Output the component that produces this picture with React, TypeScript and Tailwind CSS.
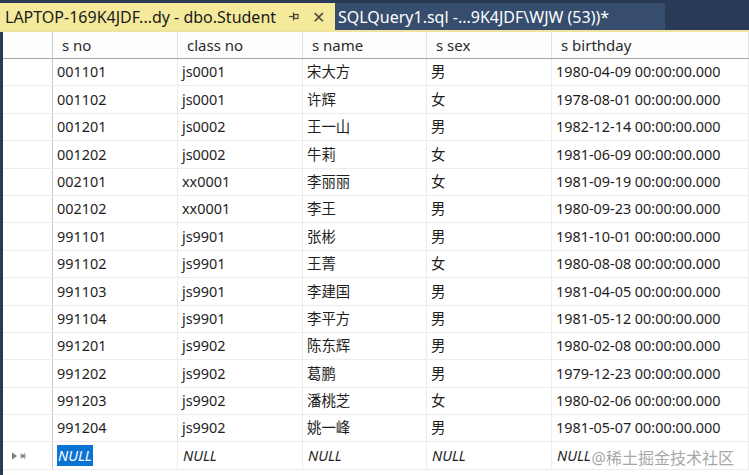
import React from "react";

// Result grid mock: SSMS-style table editor tab showing dbo.Student rows.

type Row = { no: string; cls: string; name: string; sex: string; birth: string };

const rows: Row[] = [
  { no: "001101", cls: "js0001", name: "宋大方", sex: "男", birth: "1980-04-09 00:00:00.000" },
  { no: "001102", cls: "js0001", name: "许辉", sex: "女", birth: "1978-08-01 00:00:00.000" },
  { no: "001201", cls: "js0002", name: "王一山", sex: "男", birth: "1982-12-14 00:00:00.000" },
  { no: "001202", cls: "js0002", name: "牛莉", sex: "女", birth: "1981-06-09 00:00:00.000" },
  { no: "002101", cls: "xx0001", name: "李丽丽", sex: "女", birth: "1981-09-19 00:00:00.000" },
  { no: "002102", cls: "xx0001", name: "李王", sex: "男", birth: "1980-09-23 00:00:00.000" },
  { no: "991101", cls: "js9901", name: "张彬", sex: "男", birth: "1981-10-01 00:00:00.000" },
  { no: "991102", cls: "js9901", name: "王菁", sex: "女", birth: "1980-08-08 00:00:00.000" },
  { no: "991103", cls: "js9901", name: "李建国", sex: "男", birth: "1981-04-05 00:00:00.000" },
  { no: "991104", cls: "js9901", name: "李平方", sex: "男", birth: "1981-05-12 00:00:00.000" },
  { no: "991201", cls: "js9902", name: "陈东辉", sex: "男", birth: "1980-02-08 00:00:00.000" },
  { no: "991202", cls: "js9902", name: "葛鹏", sex: "男", birth: "1979-12-23 00:00:00.000" },
  { no: "991203", cls: "js9902", name: "潘桃芝", sex: "女", birth: "1980-02-06 00:00:00.000" },
  { no: "991204", cls: "js9902", name: "姚一峰", sex: "男", birth: "1981-05-07 00:00:00.000" },
];

const headers = ["s no", "class no", "s name", "s sex", "s birthday"];

const cols = "grid grid-cols-[50px_125px_125px_124px_125px_1fr]";

function PinIcon() {
  return (
    <svg width="11" height="9" viewBox="0 0 11 9" className="text-[#4a4a3a]">
      <path d="M0 4.5h4" stroke="currentColor" strokeWidth="1.2" fill="none" />
      <rect x="5" y="2.5" width="4" height="4" stroke="currentColor" strokeWidth="1.2" fill="none" />
      <path d="M4.5 0.5v8" stroke="currentColor" strokeWidth="1.2" fill="none" />
    </svg>
  );
}

function NewRowMark() {
  return (
    <svg width="16" height="8" viewBox="0 0 16 8" className="text-[#7a7a7a]">
      <path d="M1 0.5L6 4L1 7.5Z" fill="currentColor" />
      <path d="M10 1.5l4 5M14 1.5l-4 5M8.7 4h6.6" stroke="currentColor" strokeWidth="1.2" />
    </svg>
  );
}

export default function App() {
  return (
    <div className="relative h-[475px] w-[749px] overflow-hidden bg-[#293a56] font-['Noto_Sans','Noto_Sans_CJK_SC',sans-serif] text-[14.4px] text-[#1e1e1e]">
      {/* tab strip */}
      <div className="mt-[3px] flex h-[27px]">
        <div className="flex w-[335px] items-center bg-[#f5ea9c] pl-[5px] text-[16px] text-[#1b1b1b]">
          <span className="whitespace-nowrap">LAPTOP-169K4JDF...dy - dbo.Student</span>
          <span className="ml-[13px]"><PinIcon /></span>
          <span className="ml-[12px] text-[16px] leading-none text-[#4a4a3a]">✕</span>
        </div>
        <div className="flex w-[330px] items-center bg-[#364d6e] pl-[3px] text-[16px] text-white">
          <span className="whitespace-nowrap">SQLQuery1.sql -...9K4JDF\WJW (53))*</span>
        </div>
      </div>
      <div className="h-[2px] bg-[#efe39e]" />

      {/* grid */}
      <div className="ml-[3px] h-[443px] bg-white">
        <div className={`${cols} h-[27px] border-b border-[#a8a8a8] bg-[#fdfdfd] text-[15px]`}>
          <div className="border-r border-[#c9c9c9]" />
          {headers.map((h) => (
            <div key={h} className="flex items-center border-r border-[#e2e2e2] pl-[9px] text-[#2a2a2a]">
              {h}
            </div>
          ))}
        </div>
        {rows.map((r) => (
          <div key={r.no} className={`${cols} h-[27.4px] border-b border-[#ececec]`}>
            <div className="border-r border-[#c9c9c9]" />
            {[r.no, r.cls, r.name, r.sex, r.birth].map((v, i) => (
              <div key={i} className="flex items-center border-r border-[#ececec] pl-[4px]">
                {v}
              </div>
            ))}
          </div>
        ))}
        <div className={`${cols} h-[27.4px] border-b border-[#ececec]`}>
          <div className="flex items-center border-r border-[#c9c9c9] pl-[8px]">
            <NewRowMark />
          </div>
          {[0, 1, 2, 3, 4].map((i) => (
            <div key={i} className="flex items-center border-r border-[#ececec] pl-[4px] italic">
              {i === 0 ? (
                <span className="bg-[#0a74d4] px-[1px] text-white">NULL</span>
              ) : (
                <span className="pl-[1px]">NULL</span>
              )}
            </div>
          ))}
        </div>
      </div>

      {/* watermark */}
      <div className="pointer-events-none absolute bottom-[5px] right-[15px] text-[16px] text-[#8f8f8f]/80">
        @稀土掘金技术社区
      </div>
    </div>
  );
}
